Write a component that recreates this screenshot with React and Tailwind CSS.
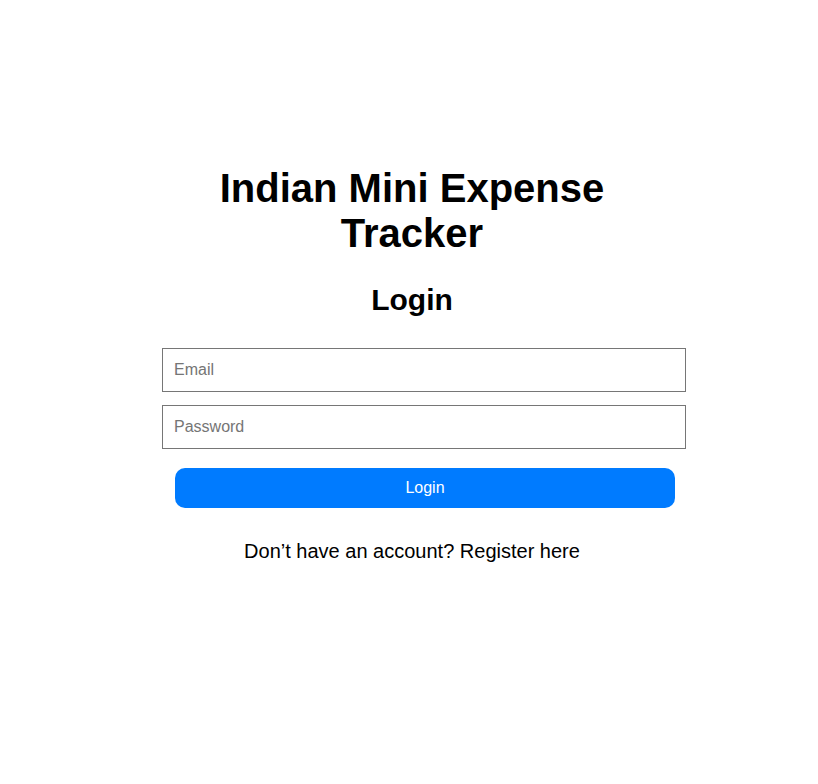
import React, { useState } from 'react';

const Login = () => {
  const [formData, setFormData] = useState({ email: '', password: '' });

  const handleChange = (e) => {
    const { name, value } = e.target;
    setFormData((prev) => ({ ...prev, [name]: value }));
  };

  const handleSubmit = (e) => {
    e.preventDefault();
  };

  return (
    <div className="min-h-screen bg-white flex justify-center pl-[6px] font-['Liberation_Sans',Arial,sans-serif] text-black">
      <div className="w-[500px] pt-[166px] flex flex-col items-center">
        <h1 className="w-[420px] text-center text-[40px] leading-[normal] font-bold">
          Indian Mini Expense Tracker
        </h1>
        <h2 className="mt-[27px] text-[30px] leading-[normal] font-bold">Login</h2>

        <form onSubmit={handleSubmit} className="w-full mt-[31px] flex flex-col">
          {/* Email */}
          <input
            name="email"
            type="email"
            placeholder="Email"
            value={formData.email}
            onChange={handleChange}
            className="w-[524px] h-[44px] px-[11px] border border-[#767676] text-base placeholder:text-[#757575] outline-none"
          />
          {/* Password */}
          <input
            name="password"
            type="password"
            placeholder="Password"
            value={formData.password}
            onChange={handleChange}
            className="w-[524px] h-[44px] mt-[13px] px-[11px] border border-[#767676] text-base placeholder:text-[#757575] outline-none"
          />
          <button
            type="submit"
            className="w-[500px] h-[40px] ml-[13px] mt-[19px] rounded-[10px] bg-[#007bff] text-white text-base"
          >
            Login
          </button>
        </form>

        <p className="mt-[32px] text-[20px] leading-[normal]">
          Don’t have an account? <a href="#">Register here</a>
        </p>
      </div>
    </div>
  );
};

export default Login;
